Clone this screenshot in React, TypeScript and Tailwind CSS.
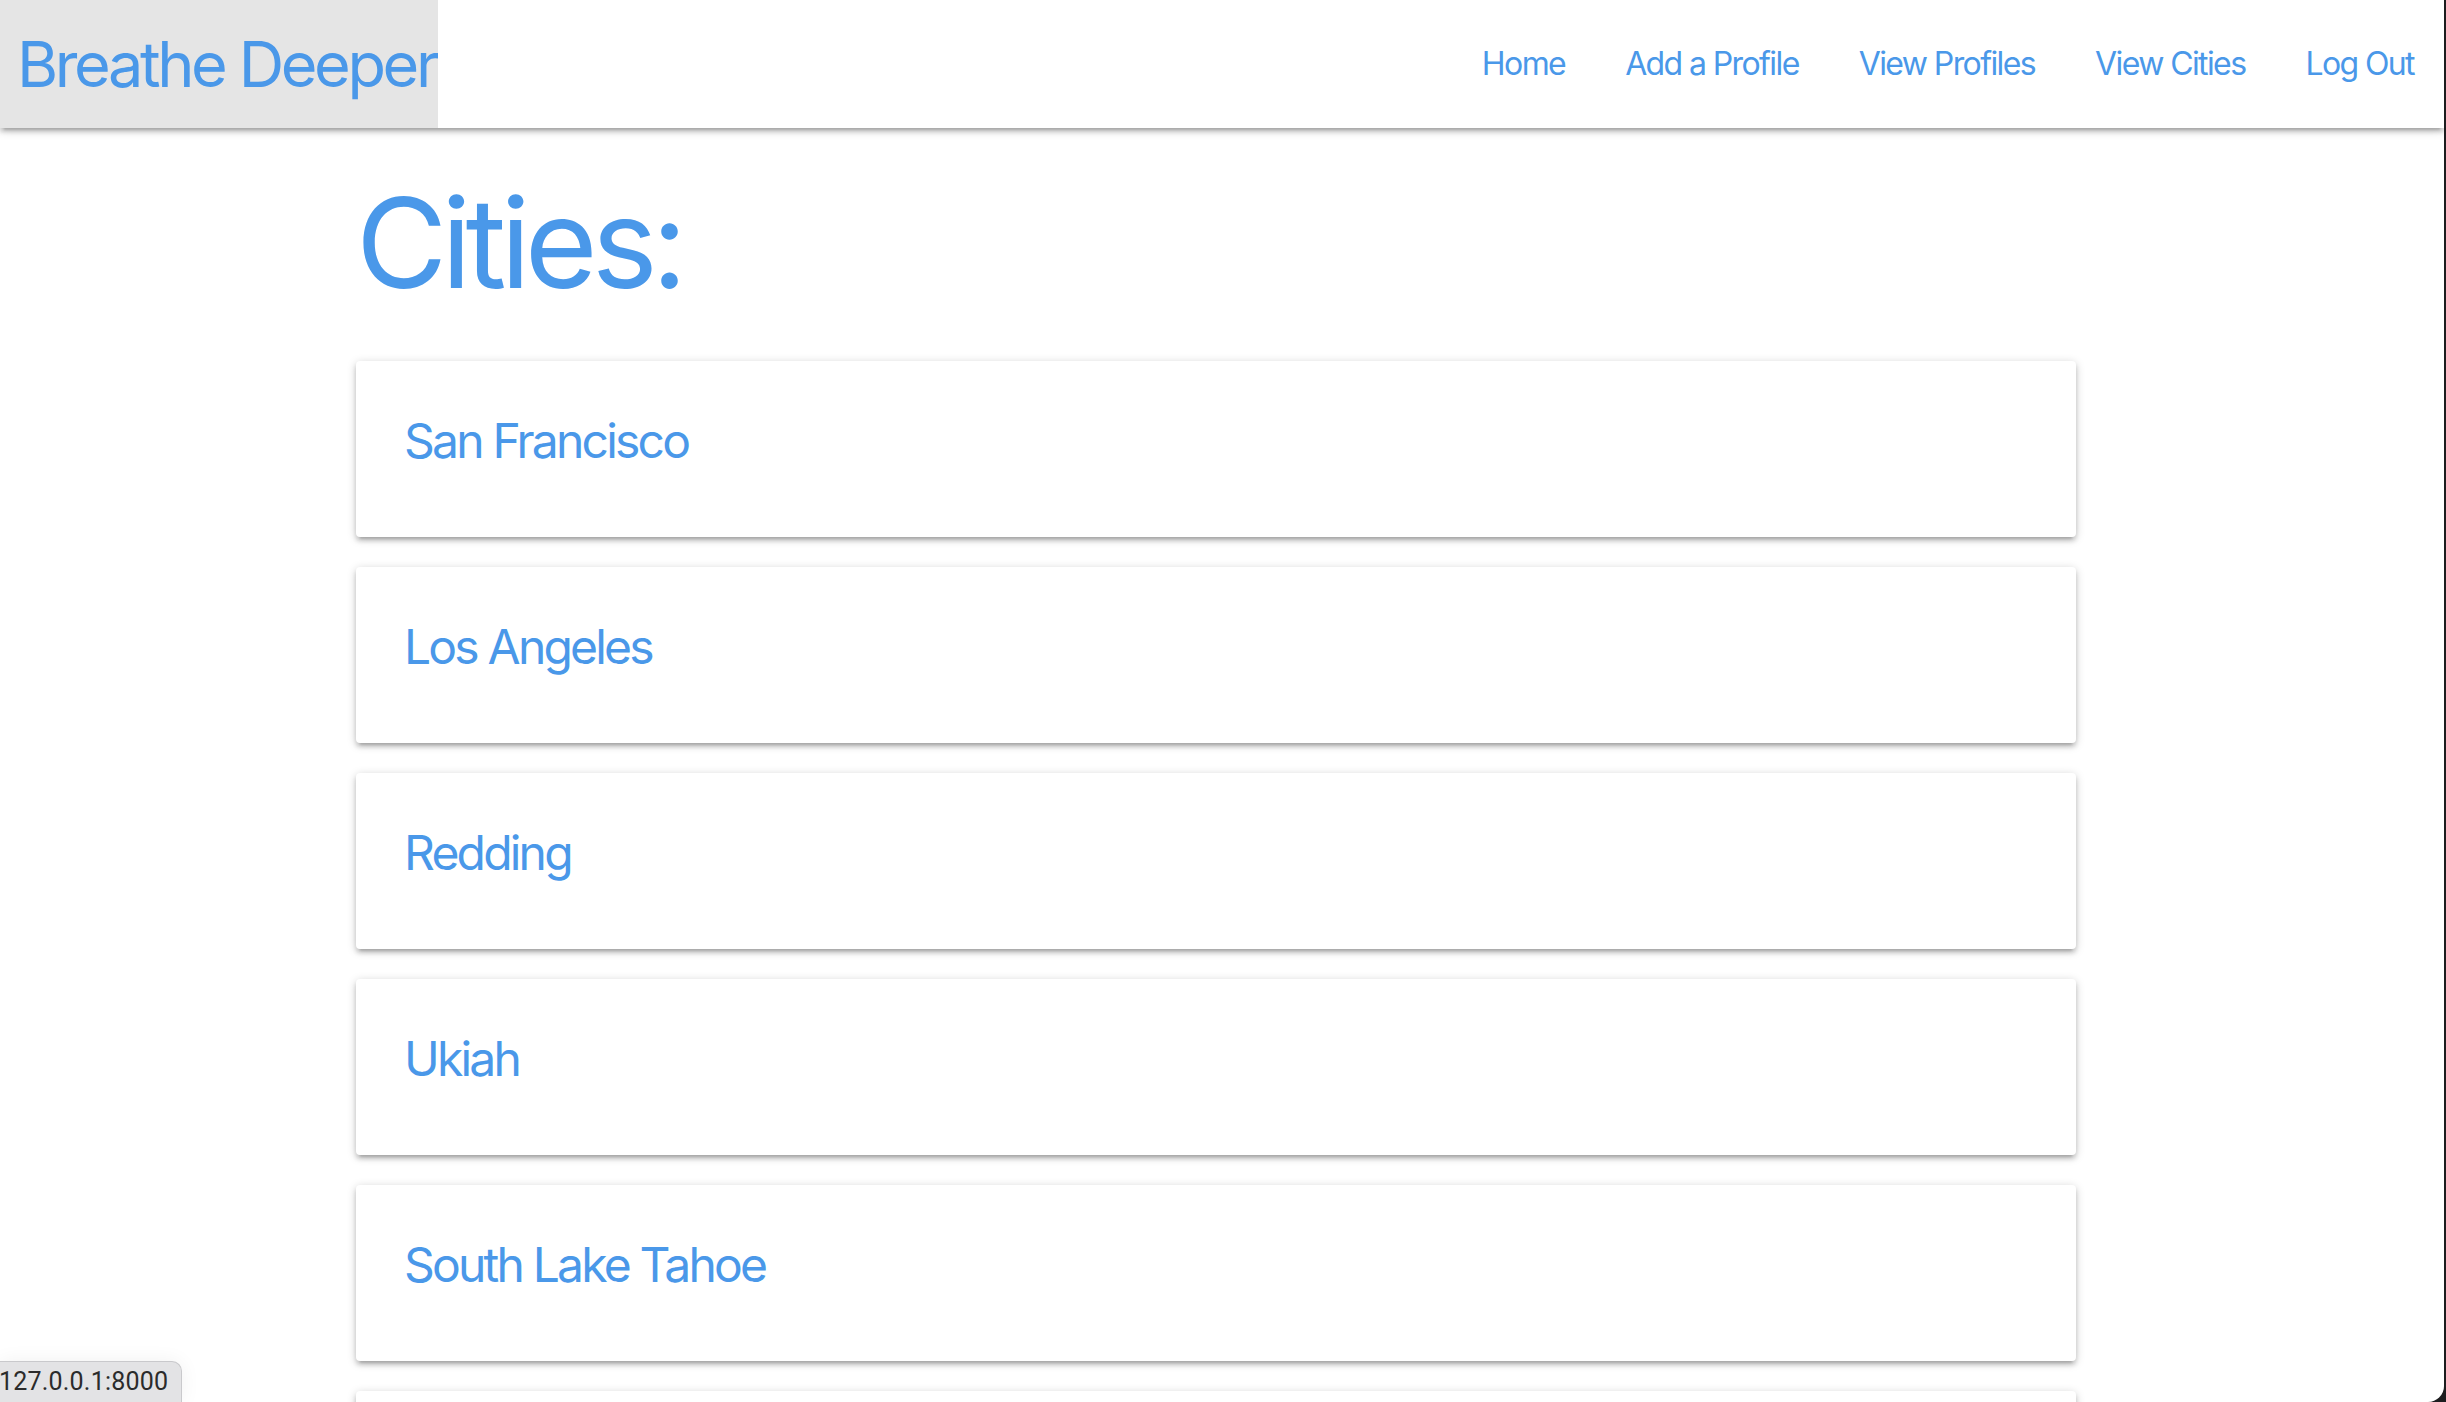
import React from "react";

const cities = ["San Francisco", "Los Angeles", "Redding", "Ukiah", "South Lake Tahoe", ""];
const links = ["Home", "Add a Profile", "View Profiles", "View Cities", "Log Out"];

export default function App() {
  return (
    <div className="w-[2446px] h-[1402px] overflow-hidden flex bg-[#1d1d1f] font-['Inter',sans-serif]">
      <div className="w-[2444px] h-full bg-white relative overflow-hidden rounded-br-[16px] shrink-0">
        <nav className="h-[128px] bg-white flex justify-between relative z-10 shadow-[0_4px_4px_0_rgba(0,0,0,0.14),0_6px_2px_-4px_rgba(0,0,0,0.12),0_2px_10px_0_rgba(0,0,0,0.2)]">
          <div className="bg-[#e5e5e5] w-[438px] h-[128px] pl-[17px] text-[63px] leading-[128px] tracking-[-3.4px] text-[#4a98e9] overflow-hidden whitespace-nowrap">
            Breathe Deeper
          </div>
          <ul className="flex">
            {links.map((l) => (
              <li key={l} className="px-[30px] text-[32px] leading-[128px] text-[#4a98e9] whitespace-nowrap tracking-[-1.6px]">
                {l}
              </li>
            ))}
          </ul>
        </nav>
        <main className="ml-[356px] w-[1720px]">
          <h1 className="mt-[52px] text-[125px] leading-[125px] text-[#4a98e9] tracking-[-6px]">Cities:</h1>
          <div className="mt-[56px] flex flex-col gap-[30px]">
            {cities.map((c, i) => (
              <div
                key={i}
                className="h-[176px] shrink-0 bg-white rounded-[4px] pt-[48px] pl-[48px] shadow-[0_4px_4px_0_rgba(0,0,0,0.14),0_6px_2px_-4px_rgba(0,0,0,0.12),0_2px_10px_0_rgba(0,0,0,0.2)]"
              >
                {c && <span className="text-[48px] leading-[64px] text-[#4a98e9] tracking-[-2.8px]">{c}</span>}
              </div>
            ))}
          </div>
        </main>
        <div className="absolute left-0 bottom-0 h-[41px] w-[182px] bg-[#e3e3e5] border-t border-r border-[#c9c9cc] rounded-tr-[10px] shadow-[0_0_20px_rgba(0,0,0,0.06)] flex items-center overflow-hidden">
          <span className="text-[25px] text-[#2b2b2b] font-['Roboto',sans-serif] whitespace-nowrap -ml-[1px] tracking-[0.2px]">127.0.0.1:8000</span>
        </div>
      </div>
    </div>
  );
}
